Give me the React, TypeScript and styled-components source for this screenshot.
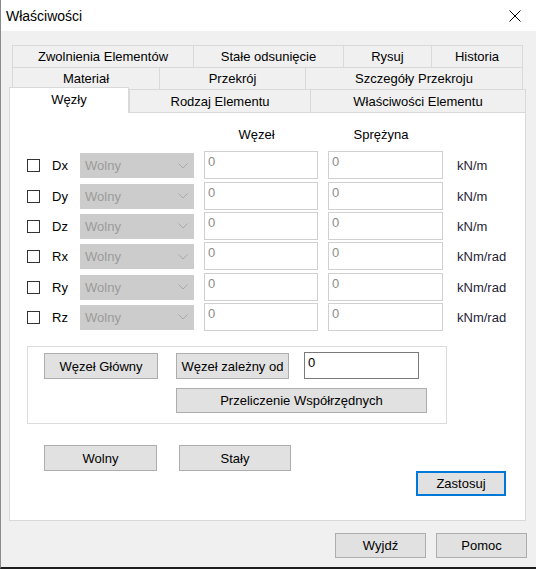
import React from 'react';
import styled, { createGlobalStyle } from 'styled-components';

const GlobalStyle = createGlobalStyle`
  html, body {
    margin: 0;
    padding: 0;
    background: #f0f0f0;
  }
  body {
    font-family: "Liberation Sans", Arial, sans-serif;
    font-size: 13px;
    color: #000;
  }
  * {
    box-sizing: border-box;
  }
`;

const Window = styled.div`
  width: 536px;
  height: 569px;
  display: flex;
  flex-direction: column;
  background: #f0f0f0;
  border-left: 1px solid #8a8a8a;
  border-bottom: 2px solid #1e1e1e;
  overflow: hidden;
`;

const TitleBar = styled.div`
  height: 31px;
  flex: none;
  background: #fff;
  display: flex;
  align-items: center;
  justify-content: space-between;
  padding: 0 15px 0 5px;
  font-size: 14px;
`;

const Body = styled.div`
  flex: 1;
  padding: 14px 0 0 8px;
`;

const TabRow = styled.div<{ $h: number; $indent: number }>`
  display: flex;
  align-items: flex-start;
  height: ${(p) => p.$h}px;
  margin-left: ${(p) => p.$indent}px;
`;

const Tab = styled.div<{ $w: number }>`
  width: ${(p) => p.$w}px;
  height: 100%;
  display: flex;
  align-items: center;
  justify-content: center;
  border-top: 1px solid #d9d9d9;
  border-left: 1px solid #d9d9d9;
  white-space: nowrap;

  &:last-child {
    border-right: 1px solid #d9d9d9;
  }
`;

const ActiveTab = styled.div`
  position: relative;
  z-index: 1;
  width: 120px;
  height: 26px;
  margin: -2px 0 -1px;
  display: flex;
  align-items: center;
  justify-content: center;
  padding-bottom: 3px;
  background: #fff;
  border: 1px solid #d9d9d9;
  border-bottom: none;
`;

const Panel = styled.div`
  width: 517px;
  height: 409px;
  background: #fff;
  border: 1px solid #d9d9d9;
  padding: 14px 0 0 17px;
  display: flex;
  flex-direction: column;
`;

const Fields = styled.div`
  display: grid;
  grid-template-columns: 15px 18px 114px 114px 115px 1fr;
  grid-template-rows: 22px 29px 28px 28px 29px 28px 28px;
  column-gap: 10px;
  row-gap: 2px;
`;

const ColHeader = styled.div<{ $col: number }>`
  grid-column: ${(p) => p.$col};
  align-self: start;
  line-height: 16px;
  text-align: center;
  padding-right: 9px;
`;

const Check = styled.span`
  align-self: center;
  width: 13px;
  height: 13px;
  border: 1px solid #333;
  background: #fff;
`;

const DofLabel = styled.span`
  align-self: center;
  white-space: nowrap;
`;

const Combo = styled.div`
  align-self: center;
  height: 25px;
  background: #cccccc;
  color: #9b9b9b;
  display: flex;
  align-items: center;
  justify-content: space-between;
  padding: 0 6px 0 5px;
`;

const ValueBox = styled.div<{ $dark?: boolean }>`
  align-self: start;
  height: 28px;
  background: #fff;
  border: 1px solid ${(p) => (p.$dark ? '#7a7a7a' : '#d0d0d0')};
  color: ${(p) => (p.$dark ? '#000' : '#8c8c8c')};
  padding: 2px 3px;
  line-height: 16px;
`;

const Unit = styled.span`
  align-self: center;
  padding-left: 4px;
  color: #1f2436;
`;

const Group = styled.div`
  margin-top: 15px;
  width: 420px;
  height: 78px;
  border: 1px solid #dcdcdc;
  padding: 6px 0 0 16px;
`;

const GroupRow = styled.div<{ $indent?: number; $top?: number }>`
  display: flex;
  align-items: flex-start;
  margin-left: ${(p) => p.$indent ?? 0}px;
  margin-top: ${(p) => p.$top ?? 0}px;
`;

const Button = styled.div<{ $w: number; $h?: number; $gap?: number; $focused?: boolean }>`
  width: ${(p) => p.$w}px;
  height: ${(p) => p.$h ?? 26}px;
  margin-left: ${(p) => p.$gap ?? 0}px;
  flex: none;
  display: flex;
  align-items: center;
  justify-content: center;
  background: #e1e1e1;
  border: ${(p) => (p.$focused ? '2px solid #0078d7' : '1px solid #adadad')};
  white-space: nowrap;
`;

const LinkedBox = styled(ValueBox)`
  width: 115px;
  height: 27px;
  margin: -1px 0 0 15px;
`;

const ActionRow = styled.div`
  display: flex;
  margin: 21px 0 0 17px;
`;

const ApplyRow = styled.div`
  display: flex;
  justify-content: flex-end;
  margin-right: 19px;
`;

const Footer = styled.div`
  display: flex;
  justify-content: flex-end;
  gap: 10px;
  margin-top: 12px;
  padding-right: 9px;
`;

const Chevron = () => (
  <svg width="10" height="6" viewBox="0 0 10 6">
    <polyline points="0.5,0.5 5,5 9.5,0.5" fill="none" stroke="#a8a8a8" strokeWidth="1" />
  </svg>
);

const CloseIcon = () => (
  <svg width="12" height="12" viewBox="0 0 12 12">
    <path d="M0.5 0.5 L11.5 11.5 M11.5 0.5 L0.5 11.5" stroke="#000" strokeWidth="1" />
  </svg>
);

const dofs = [
  { name: 'Dx', unit: 'kN/m' },
  { name: 'Dy', unit: 'kN/m' },
  { name: 'Dz', unit: 'kN/m' },
  { name: 'Rx', unit: 'kNm/rad' },
  { name: 'Ry', unit: 'kNm/rad' },
  { name: 'Rz', unit: 'kNm/rad' },
];

const App: React.FC = () => {
  return (
    <>
      <GlobalStyle />
      <Window>
        <TitleBar>
          <span>Właściwości</span>
          <CloseIcon />
        </TitleBar>
        <Body>
          <TabRow $h={22} $indent={3}>
            <Tab $w={181}>Zwolnienia Elementów</Tab>
            <Tab $w={150}>Stałe odsunięcie</Tab>
            <Tab $w={88}>Rysuj</Tab>
            <Tab $w={92}>Historia</Tab>
          </TabRow>
          <TabRow $h={22} $indent={3}>
            <Tab $w={147}>Materiał</Tab>
            <Tab $w={146}>Przekrój</Tab>
            <Tab $w={218}>Szczegóły Przekroju</Tab>
          </TabRow>
          <TabRow $h={23} $indent={0}>
            <ActiveTab>Węzły</ActiveTab>
            <Tab $w={181}>Rodzaj Elementu</Tab>
            <Tab $w={216}>Właściwości Elementu</Tab>
          </TabRow>
          <Panel>
            <Fields>
              <ColHeader $col={4}>Węzeł</ColHeader>
              <ColHeader $col={5}>Sprężyna</ColHeader>
              <span />
              {dofs.map((d) => (
                <React.Fragment key={d.name}>
                  <Check />
                  <DofLabel>{d.name}</DofLabel>
                  <Combo>
                    <span>Wolny</span>
                    <Chevron />
                  </Combo>
                  <ValueBox>0</ValueBox>
                  <ValueBox>0</ValueBox>
                  <Unit>{d.unit}</Unit>
                </React.Fragment>
              ))}
            </Fields>
            <Group>
              <GroupRow>
                <Button $w={114}>Węzeł Główny</Button>
                <Button $w={113} $gap={18}>Węzeł zależny od</Button>
                <LinkedBox $dark>0</LinkedBox>
              </GroupRow>
              <GroupRow $indent={132} $top={9}>
                <Button $w={251} $h={25}>Przeliczenie Współrzędnych</Button>
              </GroupRow>
            </Group>
            <ActionRow>
              <Button $w={113}>Wolny</Button>
              <Button $w={112} $gap={22}>Stały</Button>
            </ActionRow>
            <ApplyRow>
              <Button $w={90} $h={25} $focused>Zastosuj</Button>
            </ApplyRow>
          </Panel>
          <Footer>
            <Button $w={91} $h={25}>Wyjdź</Button>
            <Button $w={91} $h={25}>Pomoc</Button>
          </Footer>
        </Body>
      </Window>
    </>
  );
};

export default App;
